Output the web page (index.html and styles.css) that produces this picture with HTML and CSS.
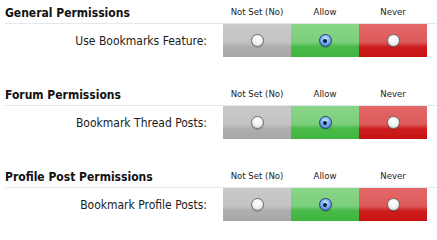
FILE: index.html
```html
<!DOCTYPE html>
<html>
<head>
<meta charset="utf-8">
<link rel="stylesheet" href="styles.css">
</head>
<body>
<section class="group">
  <div class="group-head">
    <h3 class="group-title">General Permissions</h3>
    <div class="col-heads"><span>Not Set (No)</span><span>Allow</span><span>Never</span></div>
  </div>
  <div class="perm-row">
    <div class="perm-label">Use Bookmarks Feature:</div>
    <div class="cells">
      <label class="cell notset"><span class="radio"></span></label>
      <label class="cell allow"><span class="radio checked"></span></label>
      <label class="cell never"><span class="radio"></span></label>
    </div>
  </div>
</section>
<section class="group">
  <div class="group-head">
    <h3 class="group-title">Forum Permissions</h3>
    <div class="col-heads"><span>Not Set (No)</span><span>Allow</span><span>Never</span></div>
  </div>
  <div class="perm-row">
    <div class="perm-label">Bookmark Thread Posts:</div>
    <div class="cells">
      <label class="cell notset"><span class="radio"></span></label>
      <label class="cell allow"><span class="radio checked"></span></label>
      <label class="cell never"><span class="radio"></span></label>
    </div>
  </div>
</section>
<section class="group">
  <div class="group-head">
    <h3 class="group-title">Profile Post Permissions</h3>
    <div class="col-heads"><span>Not Set (No)</span><span>Allow</span><span>Never</span></div>
  </div>
  <div class="perm-row">
    <div class="perm-label">Bookmark Profile Posts:</div>
    <div class="cells">
      <label class="cell notset"><span class="radio"></span></label>
      <label class="cell allow"><span class="radio checked"></span></label>
      <label class="cell never"><span class="radio"></span></label>
    </div>
  </div>
</section>
</body>
</html>
```
FILE: styles.css
```css
body {
  margin: 0;
  background: #ffffff;
  font-family: "DejaVu Sans Condensed", "DejaVu Sans", sans-serif;
  color: #1a1a1a;
}
.group {
  height: 82px;
  padding-left: 5px;
}
.group-head {
  display: flex;
  align-items: center;
  height: 23px;
  border-bottom: 1px solid #e2e8ee;
}
.group-title {
  flex: 1;
  margin: 0;
  font-family: "DejaVu Sans", sans-serif;
  font-stretch: condensed;
  font-size: 12px;
  font-weight: bold;
  color: #111;
  padding-top: 2px;
}
.col-heads {
  display: flex;
  margin-right: 10px;
}
.col-heads span {
  width: 68px;
  text-align: center;
  font-size: 9.5px;
  color: #222;
}
.perm-row {
  display: flex;
  align-items: center;
  height: 33px;
}
.perm-label {
  flex: 1;
  text-align: right;
  padding-right: 16px;
  font-size: 12px;
  color: #1a1a1a;
}
.cells {
  display: flex;
  margin-right: 10px;
}
.cell {
  width: 68px;
  height: 33px;
  display: flex;
  align-items: center;
  justify-content: center;
}
.notset {
  background: linear-gradient(to bottom, #c9c9c9 0%, #c3c3c3 55%, #afafaf 68%, #a7a7a7 100%);
}
.allow {
  background: linear-gradient(to bottom, #88d588 0%, #7ccf7c 55%, #4abb4a 68%, #40b540 100%);
}
.never {
  background: linear-gradient(to bottom, #e46868 0%, #dd5a5a 55%, #cd1c1c 70%, #c81212 100%);
}
.radio {
  width: 11px;
  height: 11px;
  border-radius: 50%;
  border: 1px solid #6f6f6f;
  background: radial-gradient(circle at 50% 35%, #ffffff 0%, #f4f4f4 45%, #c9c9c9 100%);
  box-shadow: 0 1px 1px rgba(0,0,0,0.15);
  position: relative;
}
.radio.checked {
  border-color: #24407a;
  background: radial-gradient(circle at 50% 35%, #cfe6ff 0%, #7db3ec 45%, #2d6ac8 100%);
}
.radio.checked::after {
  content: "";
  position: absolute;
  left: 3.5px;
  top: 3.5px;
  width: 4px;
  height: 4px;
  border-radius: 50%;
  background: #0d1b3a;
}
```
